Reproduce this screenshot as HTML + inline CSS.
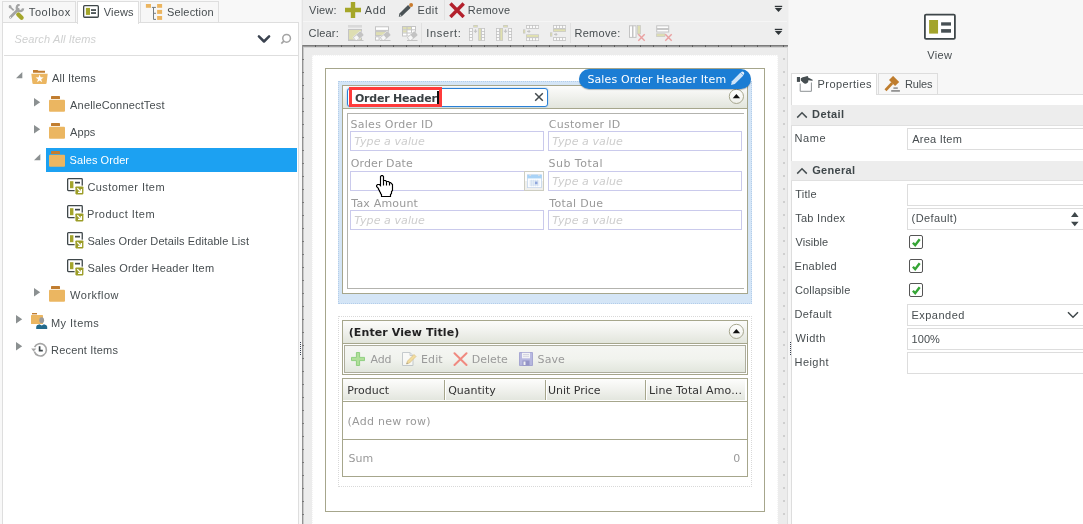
<!DOCTYPE html>
<html>
<head>
<meta charset="utf-8">
<title>View Designer</title>
<style>
*{box-sizing:border-box;margin:0;padding:0}
html,body{width:1083px;height:524px;overflow:hidden;background:#f8f8f8}
body{position:relative;will-change:transform;font-family:"Liberation Sans",sans-serif;font-size:12px;color:#474d50}
.b{position:absolute;display:block}
.t{position:absolute;white-space:nowrap;line-height:14px;display:block}
.os{font-family:"Liberation Sans",sans-serif;font-size:11px;color:#474d50}
.dv{font-family:"DejaVu Sans",sans-serif;font-size:11px;color:#333}
</style>
</head>
<body>
<!-- ===== LEFT PANEL ===== -->
<div class="b" style="left:2px;top:22px;width:297px;height:510px;background:#fff;border:1px solid #dedede"></div>
<div class="b" style="left:2px;top:1px;width:74px;height:22px;background:#f7f7f7;border:1px solid #dedede"></div>
<div class="b" style="left:140px;top:1px;width:79px;height:22px;background:#f7f7f7;border:1px solid #dedede"></div>
<div class="b" style="left:77px;top:1px;width:62px;height:23px;background:#fff;border:1px solid #dedede;border-bottom:none"></div>
<svg class="b" style="left:8px;top:4px" width="17" height="17" viewBox="0 0 17 17"><path d="M2.400 13.300L10.300 5.300" stroke="#a3a4a4" stroke-width="2.700" stroke-linecap="round"/><path d="M11.700 .700A3.200 3.200 0 1 0 15.100 4.300" fill="none" stroke="#a3a4a4" stroke-width="2.300"/><circle cx="2.400" cy="13.300" r=".6" fill="#fff"/><path d="M1 1.200q1.400-.5 2.300 .5l.3 1.600 2.700 2.500-1.200 1.200-2.600-2.600-1.500-.3Q.3 2.800 1 1.200z" fill="#a3a4a4"/><path d="M10.300 10.500l3.300 3.300" stroke="#a4a62b" stroke-width="4.300" stroke-linecap="round"/></svg>
<span class="t os" style="left:28.8px;top:5px;letter-spacing:0.60px;">Toolbox</span>
<svg class="b" style="left:83px;top:5px" width="17" height="14" viewBox="0 0 17 14"><rect x=".65" y=".65" width="14.700" height="11.600" rx="1" fill="#fff" stroke="#3f474a" stroke-width="1.300"/><rect x="2.900" y="2.900" width="4.100" height="7" fill="#a4a62b"/><rect x="8" y="4.200" width="5" height="1.700" fill="#3f474a"/><rect x="8" y="7.200" width="5" height="1.700" fill="#3f474a"/></svg>
<span class="t os" style="left:103.8px;top:5px;letter-spacing:0.14px;">Views</span>
<svg class="b" style="left:145px;top:3px" width="18" height="18" viewBox="0 0 18 18"><rect x=".9" y="1" width="5.100" height="3.800" fill="#ebb560"/><path d="M6.900 4.400h4M8.500 4.400V16.400h2.500M8.500 10.300h2.500" fill="none" stroke="#737c80" stroke-width="1"/><rect x="12.100" y="1" width="5" height="3.800" fill="#ebb560"/><rect x="12.100" y="6.900" width="5" height="4" fill="#ebb560"/><rect x="12.100" y="13" width="5" height="3.900" fill="#ebb560"/></svg>
<span class="t os" style="left:166.9px;top:5px;letter-spacing:0.18px;">Selection</span>
<div class="b" style="left:4px;top:55px;width:294px;height:1px;background:#dedede"></div>
<span class="t os" style="left:14.6px;top:32px;letter-spacing:0.12px;color:#cfd0d0;font-style:italic;">Search All Items</span>
<svg class="b" style="left:257px;top:34px" width="14" height="10" viewBox="0 0 14 10"><path d="M1.900 2.400L7 7.500l5.100-5.100" fill="none" stroke="#3a424f" stroke-width="2.500" stroke-linecap="round" stroke-linejoin="round"/></svg>
<svg class="b" style="left:280px;top:33px" width="12" height="12" viewBox="0 0 12 12"><circle cx="6.600" cy="5.300" r="3.850" fill="none" stroke="#a4a4a4" stroke-width="1.500"/><path d="M3.800 8.200L1.300 10.700" stroke="#a4a4a4" stroke-width="1.700"/></svg>
<div class="b" style="left:46px;top:148px;width:251px;height:24px;background:#1ca1f2"></div>
<svg class="b" style="left:15.7px;top:72.1px" width="7" height="7" viewBox="0 0 7 7"><path d="M6.3 0V6.3H0z" fill="#8b9091"/></svg>
<svg class="b" style="left:30.7px;top:70.0px" width="17" height="15" viewBox="0 0 17 15"><path d="M2 0h4.5l1 .8H14v2H2z" fill="#c17d2f"/><path d="M.3 3.7h16.4l-1.1 9.3q-.1 1-1.1 1H2.5q-1 0-1.1-1z" fill="#ebb661"/><path d="M8.6 4.4L9.6 7.3L12.7 7.4L10.2 9.2L11.1 12.2L8.6 10.4L6.1 12.2L7.0 9.2L4.5 7.4L7.6 7.3z" fill="#fff"/></svg>
<span class="t os" style="left:52.0px;top:71px;letter-spacing:0.19px;">All Items</span>
<svg class="b" style="left:34px;top:98.0px" width="7" height="9" viewBox="0 0 7 9"><path d="M0 0L6.2 4.3 0 8.6z" fill="#8b9091"/></svg>
<svg class="b" style="left:49px;top:96.0px" width="16" height="16" viewBox="0 0 16 16"><rect x="2" y="0" width="9" height="3" rx=".6" fill="#c17d2f"/><rect x="0" y="3.8" width="16" height="12" rx="1" fill="#ebb661"/></svg>
<span class="t os" style="left:70.1px;top:98px;letter-spacing:0.17px;">AnelleConnectTest</span>
<svg class="b" style="left:34px;top:125.1px" width="7" height="9" viewBox="0 0 7 9"><path d="M0 0L6.2 4.3 0 8.6z" fill="#8b9091"/></svg>
<svg class="b" style="left:49px;top:123.1px" width="16" height="16" viewBox="0 0 16 16"><rect x="2" y="0" width="9" height="3" rx=".6" fill="#c17d2f"/><rect x="0" y="3.8" width="16" height="12" rx="1" fill="#ebb661"/></svg>
<span class="t os" style="left:70.1px;top:125px;letter-spacing:0.05px;">Apps</span>
<svg class="b" style="left:33.7px;top:153.5px" width="7" height="7" viewBox="0 0 7 7"><path d="M6.3 0V6.3H0z" fill="#8b9091"/></svg>
<svg class="b" style="left:49px;top:151.1px" width="16" height="16" viewBox="0 0 16 16"><rect x="2" y="0" width="9" height="3" rx=".6" fill="#c17d2f"/><rect x="0" y="3.8" width="16" height="12" rx="1" fill="#ebb661"/></svg>
<span class="t os" style="left:69.6px;top:153px;letter-spacing:0.07px;color:#fff;">Sales Order</span>
<svg class="b" style="left:66.8px;top:177.8px" width="17" height="17" viewBox="0 0 17 17"><rect x=".65" y=".65" width="14.600" height="11.900" rx=".8" fill="#fff" stroke="#3f474a" stroke-width="1.300"/><rect x="3" y="3.2" width="3.4" height="7" fill="#a3a42b"/><rect x="8" y="3.8" width="5" height="1.7" fill="#3f474a"/><rect x="7.6" y="7.6" width="9" height="9" fill="#fff"/><rect x="8.4" y="8.4" width="8" height="8" rx=".8" fill="#9c9d27"/><path d="M10.3 10.3l3.6 3.6M14.4 11v3.4H11" fill="none" stroke="#fff" stroke-width="1.3"/></svg>
<span class="t os" style="left:87.4px;top:180px;letter-spacing:0.42px;">Customer Item</span>
<svg class="b" style="left:66.8px;top:204.9px" width="17" height="17" viewBox="0 0 17 17"><rect x=".65" y=".65" width="14.600" height="11.900" rx=".8" fill="#fff" stroke="#3f474a" stroke-width="1.300"/><rect x="3" y="3.2" width="3.4" height="7" fill="#a3a42b"/><rect x="8" y="3.8" width="5" height="1.7" fill="#3f474a"/><rect x="7.6" y="7.6" width="9" height="9" fill="#fff"/><rect x="8.4" y="8.4" width="8" height="8" rx=".8" fill="#9c9d27"/><path d="M10.3 10.3l3.6 3.6M14.4 11v3.4H11" fill="none" stroke="#fff" stroke-width="1.3"/></svg>
<span class="t os" style="left:86.9px;top:207px;letter-spacing:0.49px;">Product Item</span>
<svg class="b" style="left:66.8px;top:232.1px" width="17" height="17" viewBox="0 0 17 17"><rect x=".65" y=".65" width="14.600" height="11.900" rx=".8" fill="#fff" stroke="#3f474a" stroke-width="1.300"/><rect x="3" y="3.2" width="3.4" height="7" fill="#a3a42b"/><rect x="8" y="3.8" width="5" height="1.7" fill="#3f474a"/><rect x="7.6" y="7.6" width="9" height="9" fill="#fff"/><rect x="8.4" y="8.4" width="8" height="8" rx=".8" fill="#9c9d27"/><path d="M10.3 10.3l3.6 3.6M14.4 11v3.4H11" fill="none" stroke="#fff" stroke-width="1.3"/></svg>
<span class="t os" style="left:87.4px;top:234px;letter-spacing:0.10px;">Sales Order Details Editable List</span>
<svg class="b" style="left:66.8px;top:259.2px" width="17" height="17" viewBox="0 0 17 17"><rect x=".65" y=".65" width="14.600" height="11.900" rx=".8" fill="#fff" stroke="#3f474a" stroke-width="1.300"/><rect x="3" y="3.2" width="3.4" height="7" fill="#a3a42b"/><rect x="8" y="3.8" width="5" height="1.7" fill="#3f474a"/><rect x="7.6" y="7.6" width="9" height="9" fill="#fff"/><rect x="8.4" y="8.4" width="8" height="8" rx=".8" fill="#9c9d27"/><path d="M10.3 10.3l3.6 3.6M14.4 11v3.4H11" fill="none" stroke="#fff" stroke-width="1.3"/></svg>
<span class="t os" style="left:87.4px;top:261px;letter-spacing:0.20px;">Sales Order Header Item</span>
<svg class="b" style="left:34px;top:288.0px" width="7" height="9" viewBox="0 0 7 9"><path d="M0 0L6.2 4.3 0 8.6z" fill="#8b9091"/></svg>
<svg class="b" style="left:49px;top:286.0px" width="16" height="16" viewBox="0 0 16 16"><rect x="2" y="0" width="9" height="3" rx=".6" fill="#c17d2f"/><rect x="0" y="3.8" width="16" height="12" rx="1" fill="#ebb661"/></svg>
<span class="t os" style="left:70.1px;top:288px;letter-spacing:0.49px;">Workflow</span>
<svg class="b" style="left:16px;top:315.2px" width="7" height="9" viewBox="0 0 7 9"><path d="M0 0L6.2 4.3 0 8.6z" fill="#8b9091"/></svg>
<svg class="b" style="left:30.8px;top:313.2px" width="17" height="17" viewBox="0 0 17 17"><rect x="1" y="0" width="5" height="1.4" fill="#c17d2f"/><rect x="0" y="2" width="12" height="9" rx=".6" fill="#ebb661"/><ellipse cx="10.7" cy="7.2" rx="2.4" ry="3" fill="#9a9a9a"/><path d="M5.2 16v-2.3q0-1.7 3.2-2.4l2.3 1.2 2.3-1.2q3.2.7 3.2 2.4V16z" fill="#236a8c"/></svg>
<span class="t os" style="left:51.0px;top:316px;letter-spacing:0.46px;">My Items</span>
<svg class="b" style="left:16px;top:342.3px" width="7" height="9" viewBox="0 0 7 9"><path d="M0 0L6.2 4.3 0 8.6z" fill="#8b9091"/></svg>
<svg class="b" style="left:31.2px;top:341.5px" width="17" height="16" viewBox="0 0 17 16"><path d="M3.6 5.2A6.2 6.2 0 1 1 3.3 9.6" fill="none" stroke="#a5a5a5" stroke-width="1.6"/><path d="M.2 6.6h5.2L2.6 9.6z" fill="#a5a5a5"/><path d="M8.6 4.2v4.4h3.2" fill="none" stroke="#3f474a" stroke-width="1.7"/></svg>
<span class="t os" style="left:51.0px;top:343px;letter-spacing:0.19px;">Recent Items</span>
<div class="b" style="left:300px;top:342px;width:1px;height:13px;background:repeating-linear-gradient(#3a4252 0 1px,transparent 1px 2px)"></div>
<!-- ===== CENTER TOOLBARS ===== -->
<div class="b" style="left:301px;top:0px;width:1px;height:45px;background:#f1f1f1"></div>
<div class="b" style="left:302px;top:0px;width:486px;height:45px;background:#eeeeee;border-left:1px solid #e4e4e4"></div>
<div class="b" style="left:303px;top:21px;width:484px;height:1px;background:#f5f5f5"></div>
<span class="t os" style="left:309.1px;top:3px;letter-spacing:0.16px;">View:</span>
<svg class="b" style="left:345px;top:2px" width="16" height="16" viewBox="0 0 16 16"><path d="M5.8 0h4.4v5.8H16v4.4h-5.8V16H5.8v-5.8H0V5.800H5.800z" fill="#a5a628"/></svg>
<span class="t os" style="left:364.8px;top:3px;letter-spacing:0.62px;">Add</span>
<svg class="b" style="left:398px;top:2px" width="16" height="16" viewBox="0 0 16 16"><path d="M2.500 13L11.400 4.400" stroke="#4a5255" stroke-width="3.800"/><path d="M.8 14.800L1.300 11.800 3.800 14.200z" fill="#4a5255"/><circle cx="13.100" cy="3" r="1.950" fill="#c97a2b"/><circle cx="2.400" cy="13.200" r=".55" fill="#eee"/></svg>
<span class="t os" style="left:417.4px;top:3px;letter-spacing:0.48px;">Edit</span>
<div class="b" style="left:444px;top:0px;width:1px;height:20px;background:#e1e1e1"></div>
<svg class="b" style="left:448px;top:2px" width="17" height="16" viewBox="0 0 17 16"><path d="M2.400 1.500L15.700 15M15.700 1.500L2.400 15" stroke="#b3202c" stroke-width="3.400"/></svg>
<span class="t os" style="left:467.8px;top:3px;letter-spacing:0.26px;">Remove</span>
<svg class="b" style="left:774px;top:5px" width="9" height="8" viewBox="0 0 9 8"><rect x=".8" y=".8" width="7.400" height="1.300" fill="#2f3538"/><path d="M.8 3.100h7.400L4.500 7.100z" fill="#2f3538"/></svg>
<span class="t os" style="left:308.6px;top:26px;letter-spacing:0.16px;">Clear:</span>
<svg class="b" style="left:348px;top:25px" width="16" height="16" viewBox="0 0 16 16"><rect x="0" y="0" width="14" height="2.600" fill="#d9d9d9"/><rect x=".5" y="4.500" width="13" height="10.500" fill="#dedeb2" stroke="#c4c4c4"/><g transform="translate(10.3,11.3) rotate(-40)"><rect x="-5.400" y="-3" width="10.800" height="6" rx="1.200" fill="#eee"/><rect x="-5" y="-2.600" width="10" height="5.200" rx="1" fill="#c3c3c3"/><rect x="-4.300" y="-1.900" width="3.900" height="3.800" rx=".5" fill="#f7f7f7"/></g><rect x="0" y="15" width="15.500" height="1" fill="#c4c4c4"/></svg>
<svg class="b" style="left:375px;top:25px" width="16" height="16" viewBox="0 0 16 16"><rect x=".5" y="1.800" width="13" height="3.600" fill="#fff" stroke="#c4c4c4"/><rect x=".5" y="6.600" width="13" height="4" fill="#dedeb2" stroke="#c4c4c4"/><rect x=".5" y="11.800" width="3.600" height="3.400" fill="#fff" stroke="#c4c4c4"/><g transform="translate(10.3,11.3) rotate(-40)"><rect x="-5.400" y="-3" width="10.800" height="6" rx="1.200" fill="#eee"/><rect x="-5" y="-2.600" width="10" height="5.200" rx="1" fill="#c3c3c3"/><rect x="-4.300" y="-1.900" width="3.900" height="3.800" rx=".5" fill="#f7f7f7"/></g><rect x="5" y="15" width="10.500" height="1" fill="#c4c4c4"/></svg>
<svg class="b" style="left:402px;top:25px" width="16" height="16" viewBox="0 0 16 16"><rect x=".5" y="1.500" width="13" height="9.500" fill="#fff" stroke="#c4c4c4"/><rect x="1" y="2" width="8" height="2.400" fill="#dedeb2"/><rect x="1" y="5.200" width="4" height="2.400" fill="#dedeb2"/><path d="M.5 4.800h13M.5 8h13M5 1.500v9.500M9.500 1.500v9.500" stroke="#c4c4c4" fill="none"/><g transform="translate(10.3,11.3) rotate(-40)"><rect x="-5.400" y="-3" width="10.800" height="6" rx="1.200" fill="#eee"/><rect x="-5" y="-2.600" width="10" height="5.200" rx="1" fill="#c3c3c3"/><rect x="-4.300" y="-1.900" width="3.900" height="3.800" rx=".5" fill="#f7f7f7"/></g><rect x="5" y="15" width="10.500" height="1" fill="#c4c4c4"/></svg>
<div class="b" style="left:421px;top:23px;width:1px;height:20px;background:#e0e0e0"></div>
<span class="t os" style="left:426.3px;top:26px;letter-spacing:0.65px;">Insert:</span>
<svg class="b" style="left:469px;top:25px" width="16" height="16" viewBox="0 0 16 16"><rect x="4.3" y="0" width="4.4" height="2.5" fill="#c3c3c3"/><rect x="4.8999999999999995" y="0.6" width="3.20" height="1.30" fill="#e1e1b0"/><rect x="0" y="3" width="3.800" height="12.800" fill="#c3c3c3"/><rect x="0.8" y="3.80" width="2.200" height="2.200" fill="#fafafa"/><rect x="0.8" y="6.85" width="2.200" height="2.200" fill="#fafafa"/><rect x="0.8" y="9.90" width="2.200" height="2.200" fill="#fafafa"/><rect x="0.8" y="12.95" width="2.200" height="2.200" fill="#fafafa"/><path d="M6.5 4.3v3" stroke="#c3c3c3" stroke-width="1.100" fill="none"/><path d="M4.7 5.9h3.600l-1.800 2z" fill="#c3c3c3"/><path d="M4.7 5.9h3.600" stroke="#c3c3c3" stroke-width=".5"/><rect x="9.3" y="3" width="3.1" height="12.8" fill="#c3c3c3"/><rect x="9.9" y="3.6" width="1.90" height="11.60" fill="#e1e1b0"/><rect x="12.2" y="3" width="3.800" height="12.800" fill="#c3c3c3"/><rect x="13.0" y="3.80" width="2.200" height="2.200" fill="#fafafa"/><rect x="13.0" y="6.85" width="2.200" height="2.200" fill="#fafafa"/><rect x="13.0" y="9.90" width="2.200" height="2.200" fill="#fafafa"/><rect x="13.0" y="12.95" width="2.200" height="2.200" fill="#fafafa"/></svg>
<svg class="b" style="left:496px;top:25px" width="16" height="16" viewBox="0 0 16 16"><rect x="7.2" y="0" width="4.6" height="2.5" fill="#c3c3c3"/><rect x="7.8" y="0.6" width="3.40" height="1.30" fill="#e1e1b0"/><rect x="0" y="3" width="3.800" height="12.800" fill="#c3c3c3"/><rect x="0.8" y="3.80" width="2.200" height="2.200" fill="#fafafa"/><rect x="0.8" y="6.85" width="2.200" height="2.200" fill="#fafafa"/><rect x="0.8" y="9.90" width="2.200" height="2.200" fill="#fafafa"/><rect x="0.8" y="12.95" width="2.200" height="2.200" fill="#fafafa"/><rect x="3.8" y="3" width="3.1" height="12.8" fill="#c3c3c3"/><rect x="4.3999999999999995" y="3.6" width="1.90" height="11.60" fill="#e1e1b0"/><path d="M9.5 4.3v3" stroke="#c3c3c3" stroke-width="1.100" fill="none"/><path d="M7.7 5.9h3.600l-1.800 2z" fill="#c3c3c3"/><path d="M7.7 5.9h3.600" stroke="#c3c3c3" stroke-width=".5"/><rect x="12.2" y="3" width="3.800" height="12.800" fill="#c3c3c3"/><rect x="13.0" y="3.80" width="2.200" height="2.200" fill="#fafafa"/><rect x="13.0" y="6.85" width="2.200" height="2.200" fill="#fafafa"/><rect x="13.0" y="9.90" width="2.200" height="2.200" fill="#fafafa"/><rect x="13.0" y="12.95" width="2.200" height="2.200" fill="#fafafa"/></svg>
<svg class="b" style="left:523px;top:25px" width="16" height="16" viewBox="0 0 16 16"><rect x="3.1" y="0" width="12.800" height="3.800" fill="#c3c3c3"/><rect x="3.90" y="0.8" width="2.200" height="2.200" fill="#fafafa"/><rect x="6.95" y="0.8" width="2.200" height="2.200" fill="#fafafa"/><rect x="10.00" y="0.8" width="2.200" height="2.200" fill="#fafafa"/><rect x="13.05" y="0.8" width="2.200" height="2.200" fill="#fafafa"/><rect x="0" y="4.4" width="2.3" height="4.1" fill="#c3c3c3"/><rect x="0.6" y="5.0" width="1.10" height="2.90" fill="#e1e1b0"/><path d="M4 6.4h3" stroke="#c3c3c3" stroke-width="1.100" fill="none"/><path d="M5.6 4.6000000000000005v3.600l2-1.800z" fill="#c3c3c3"/><rect x="3.1" y="9.4" width="12.8" height="3.1" fill="#c3c3c3"/><rect x="3.7" y="10.0" width="11.60" height="1.90" fill="#e1e1b0"/><rect x="3.1" y="12.3" width="12.800" height="3.800" fill="#c3c3c3"/><rect x="3.90" y="13.100000000000001" width="2.200" height="2.200" fill="#fafafa"/><rect x="6.95" y="13.100000000000001" width="2.200" height="2.200" fill="#fafafa"/><rect x="10.00" y="13.100000000000001" width="2.200" height="2.200" fill="#fafafa"/><rect x="13.05" y="13.100000000000001" width="2.200" height="2.200" fill="#fafafa"/></svg>
<svg class="b" style="left:550px;top:25px" width="16" height="16" viewBox="0 0 16 16"><rect x="3.1" y="0" width="12.800" height="3.800" fill="#c3c3c3"/><rect x="3.90" y="0.8" width="2.200" height="2.200" fill="#fafafa"/><rect x="6.95" y="0.8" width="2.200" height="2.200" fill="#fafafa"/><rect x="10.00" y="0.8" width="2.200" height="2.200" fill="#fafafa"/><rect x="13.05" y="0.8" width="2.200" height="2.200" fill="#fafafa"/><rect x="3.1" y="3.8" width="12.8" height="3" fill="#c3c3c3"/><rect x="3.7" y="4.3999999999999995" width="11.60" height="1.80" fill="#e1e1b0"/><rect x="0" y="7.4" width="2.3" height="4.2" fill="#c3c3c3"/><rect x="0.6" y="8.0" width="1.10" height="3.00" fill="#e1e1b0"/><path d="M4 9.4h3" stroke="#c3c3c3" stroke-width="1.100" fill="none"/><path d="M5.6 7.6000000000000005v3.600l2-1.800z" fill="#c3c3c3"/><rect x="3.1" y="12.1" width="12.800" height="3.800" fill="#c3c3c3"/><rect x="3.90" y="12.9" width="2.200" height="2.200" fill="#fafafa"/><rect x="6.95" y="12.9" width="2.200" height="2.200" fill="#fafafa"/><rect x="10.00" y="12.9" width="2.200" height="2.200" fill="#fafafa"/><rect x="13.05" y="12.9" width="2.200" height="2.200" fill="#fafafa"/></svg>
<div class="b" style="left:570px;top:23px;width:1px;height:20px;background:#e0e0e0"></div>
<span class="t os" style="left:574.5px;top:26px;letter-spacing:0.28px;">Remove:</span>
<svg class="b" style="left:629px;top:25px" width="18" height="18" viewBox="0 0 18 18"><rect x=".5" y=".8" width="3" height="11.600" fill="#fdfdfd" stroke="#c4c4c4"/><rect x="4" y=".8" width="3" height="11.600" fill="#fdfdfd" stroke="#c4c4c4"/><rect x="8.500" y=".5" width="3" height="8.500" fill="#dedeb2" stroke="#c4c4c4" stroke-width=".6"/><path d="M9.3 9.3l6.400 6.400M15.700000000000001 9.3l-6.400 6.400" stroke="#e9a0a0" stroke-width="1.400"/></svg>
<svg class="b" style="left:656px;top:25px" width="18" height="18" viewBox="0 0 18 18"><rect x=".7" y=".8" width="12" height="2.800" fill="#fdfdfd" stroke="#c4c4c4"/><rect x=".7" y="4.400" width="12" height="2.600" fill="#fdfdfd" stroke="#c4c4c4"/><rect x=".5" y="8.800" width="8.500" height="2.800" fill="#dedeb2" stroke="#c4c4c4" stroke-width=".6"/><path d="M9.3 9.3l6.400 6.400M15.700000000000001 9.3l-6.400 6.400" stroke="#e9a0a0" stroke-width="1.400"/></svg>
<svg class="b" style="left:774px;top:28px" width="9" height="8" viewBox="0 0 9 8"><rect x=".8" y=".8" width="7.400" height="1.300" fill="#2f3538"/><path d="M.8 3.100h7.400L4.500 7.100z" fill="#2f3538"/></svg>
<!-- ===== CANVAS ===== -->
<div class="b" style="left:302px;top:45px;width:486px;height:480px;background:#ececec"></div>
<div class="b" style="left:302px;top:45px;width:486px;height:1px;background:#7c7c7c"></div>
<div class="b" style="left:302px;top:46px;width:486px;height:1px;background:#9e9e9e"></div>
<div class="b" style="left:303px;top:47px;width:485px;height:1px;background:#d6d6d6"></div>
<div class="b" style="left:302px;top:45px;width:1px;height:480px;background:#929292"></div>
<div class="b" style="left:303px;top:47px;width:1px;height:480px;background:#c9c9c9"></div>
<div class="b" style="left:304px;top:45px;width:484px;height:2px;background:repeating-linear-gradient(90deg,transparent 0 11.200px,#5e5e5e 11.200px 12.400px,transparent 12.400px 13px)"></div>
<div class="b" style="left:302px;top:47px;width:2px;height:480px;background:repeating-linear-gradient(transparent 0 11.600px,#787878 11.600px 12.800px,transparent 12.800px 13px)"></div>
<div class="b" style="left:783px;top:56px;width:2px;height:470px;background:repeating-linear-gradient(transparent 0 1.700px,#cfcfcf 1.700px 3.700px,transparent 3.700px 13px)"></div>
<div class="b" style="left:312px;top:55px;width:465.5px;height:480px;background:#fff;border:1px dotted #f4f4f4"></div>
<div class="b" style="left:325px;top:68px;width:440px;height:444px;background:#fff;border:1px solid #a6a68c"></div>
<div class="b" style="left:338px;top:81px;width:414px;height:223px;background:#d4e5f6;border:1px dotted #b3cdea"></div>
<div class="b" style="left:342px;top:85px;width:406px;height:209px;background:#fff;border:1px solid #a6a68c"></div>
<div class="b" style="left:343px;top:86px;width:404px;height:22px;background:linear-gradient(#fcfcfb,#f1f2ee 45%,#e2e5dc)"></div>
<div class="b" style="left:343px;top:108px;width:404px;height:1px;background:#a6a68c"></div>
<div class="b" style="left:347px;top:113px;width:397px;height:176px;background:#fff;border:1px solid #b3b3ae;border-right:none"></div>
<div class="b" style="left:347px;top:88px;width:201px;height:19px;background:#fff;border:1px solid #2a80d6;border-radius:3px;box-shadow:0 0 2px #8fc0ee"></div>
<div class="b" style="left:349px;top:87px;width:93px;height:20px;border:3px solid #ff3b3b"></div>
<span class="t dv" style="left:354.9px;top:92px;letter-spacing:-0.20px;color:#3a4144;font-weight:700;">Order Header</span>
<div class="b" style="left:437px;top:91px;width:1.5px;height:13px;background:#111"></div>
<svg class="b" style="left:534px;top:92px" width="10" height="10" viewBox="0 0 10 10"><path d="M1.200 1.200l7.600 7.600M8.800 1.200L1.200 8.800" stroke="#444b4e" stroke-width="1.500"/></svg>
<svg class="b" style="left:728.1px;top:87.89999999999999px" width="17" height="17" viewBox="0 0 17 17"><defs><linearGradient id="cb96" x1="0" y1="0" x2="0" y2="1"><stop offset="0" stop-color="#fff"/><stop offset="1" stop-color="#eff0ea"/></linearGradient></defs><circle cx="8.400" cy="8.400" r="7.100" fill="url(#cb96)" stroke="#a7a78f" stroke-width="1"/><path d="M4.700 10.200h7.400L8.400 5.900z" fill="#111"/></svg>
<div class="b" style="left:579px;top:69px;width:172px;height:20px;background:#1b7dd4;border-radius:10px;box-shadow:0 1px 1px rgba(0,0,0,.25)"></div>
<span class="t dv" style="left:587.4px;top:73px;letter-spacing:0.12px;color:#fff;">Sales Order Header Item</span>
<svg class="b" style="left:729px;top:70px" width="17" height="17" viewBox="0 0 17 17"><path d="M2 15l.9-3.800L11.500 2.600l2.900 2.900L5.800 14.100z" fill="#cfe4f8"/><path d="M12.200 1.900q1.200-1 2.400 .2t.2 2.400l-.4 .4-2.600-2.600z" fill="#e6f1fb"/></svg>
<span class="t dv" style="left:350.6px;top:118px;letter-spacing:0.25px;color:#999;">Sales Order ID</span>
<div class="b" style="left:350.3px;top:131.3px;width:193.5px;height:19.5px;background:#fff;border:1px solid #cacaec"></div>
<span class="t dv" style="left:354.2px;top:135px;letter-spacing:0.08px;color:#cdcdcd;font-style:italic;">Type a value</span>
<span class="t dv" style="left:548.8px;top:118px;letter-spacing:0.27px;color:#999;">Customer ID</span>
<div class="b" style="left:548.3px;top:131.3px;width:193.5px;height:19.5px;background:#fff;border:1px solid #cacaec"></div>
<span class="t dv" style="left:552.2px;top:135px;letter-spacing:0.08px;color:#cdcdcd;font-style:italic;">Type a value</span>
<span class="t dv" style="left:350.8px;top:157px;letter-spacing:0.09px;color:#999;">Order Date</span>
<div class="b" style="left:350.3px;top:171px;width:174.5px;height:19.5px;background:#fff;border:1px solid #cacaec"></div>
<div class="b" style="left:523.8px;top:171px;width:20px;height:19.5px;background:linear-gradient(#fdfdfd 50%,#f0f0ed 50%);border:1px solid #cdcdc1"></div>
<svg class="b" style="left:526.8px;top:173.5px" width="15" height="14" viewBox="0 0 15 14"><rect x=".5" y=".9" width="14" height="12.800" fill="#fbfdff" stroke="#c3d5ea" stroke-width=".8"/><rect x=".3" y=".7" width="14.400" height="3.700" fill="#a9d3f6"/><rect x="2.300" y="0" width="1.800" height="1.700" rx=".5" fill="#e4e4e4"/><rect x="11" y="0" width="1.800" height="1.700" rx=".5" fill="#e4e4e4"/><path d="M2.500 7h10M2.500 9h10M2.500 11h10M4.300 5.800v6.500M6.300 5.800v6.500M8.300 5.800v6.500M10.300 5.800v6.500" stroke="#d3e0f0" stroke-width="1"/><rect x="8" y="7.600" width="2.500" height="2.600" fill="#8fa6dc"/></svg>
<span class="t dv" style="left:548.5px;top:157px;letter-spacing:0.48px;color:#999;">Sub Total</span>
<div class="b" style="left:548.3px;top:171px;width:193.5px;height:19.5px;background:#fff;border:1px solid #cacaec"></div>
<span class="t dv" style="left:552.2px;top:175px;letter-spacing:0.08px;color:#cdcdcd;font-style:italic;">Type a value</span>
<span class="t dv" style="left:351.3px;top:197px;letter-spacing:0.19px;color:#999;">Tax Amount</span>
<div class="b" style="left:350.3px;top:210.3px;width:193.5px;height:19.5px;background:#fff;border:1px solid #cacaec"></div>
<span class="t dv" style="left:354.2px;top:214px;letter-spacing:0.08px;color:#cdcdcd;font-style:italic;">Type a value</span>
<span class="t dv" style="left:549.3px;top:197px;letter-spacing:0.28px;color:#999;">Total Due</span>
<div class="b" style="left:548.3px;top:210.3px;width:193.5px;height:19.5px;background:#fff;border:1px solid #cacaec"></div>
<span class="t dv" style="left:552.2px;top:214px;letter-spacing:0.08px;color:#cdcdcd;font-style:italic;">Type a value</span>
<svg class="b" style="left:376px;top:175px" width="18" height="23" viewBox="0 0 18 23"><path d="M5.500 .5H6.500L7.500 1.500V5.500H9.500L10.500 6.500H12.500L13.500 7.500H14.500L16.500 9.500V15.500L15.500 16.500V18.500L14.500 19.500V21.500H5.500V19.500L4.500 18.500V17.500L3.500 16.500V15.500L2.500 14.500V13.500L.5 11.500V10.500L1.500 9.500H3.500L4.500 10.500V1.500z" fill="#fff" stroke="#000" stroke-width="1.150" stroke-linejoin="miter"/><path d="M7.500 5.500V10.500M10.500 6.500V10.500M13.500 8V10.500" stroke="#000" stroke-width="1.150" fill="none"/></svg>
<div class="b" style="left:338px;top:316px;width:414px;height:171px;border:1px dotted #d9d9d9"></div>
<div class="b" style="left:342px;top:320px;width:406px;height:24px;background:linear-gradient(#fcfcfb,#f1f2ee 45%,#e2e5dc);border:1px solid #a6a68c"></div>
<span class="t dv" style="left:348.7px;top:326px;letter-spacing:0.11px;color:#222;font-weight:700;">(Enter View Title)</span>
<svg class="b" style="left:727.9px;top:323.0px" width="17" height="17" viewBox="0 0 17 17"><defs><linearGradient id="cb331" x1="0" y1="0" x2="0" y2="1"><stop offset="0" stop-color="#fff"/><stop offset="1" stop-color="#eff0ea"/></linearGradient></defs><circle cx="8.400" cy="8.400" r="7.100" fill="url(#cb331)" stroke="#a7a78f" stroke-width="1"/><path d="M4.700 10.200h7.400L8.400 5.900z" fill="#111"/></svg>
<div class="b" style="left:342px;top:344px;width:406px;height:31px;background:#fff;border:1px solid #a6a68c;border-top:none"></div>
<div class="b" style="left:344px;top:345px;width:402px;height:28px;background:linear-gradient(#f5f6f3,#f1f3ee 50%,#e2e6dd);border:1px solid #adad9c"></div>
<svg class="b" style="left:351px;top:352px" width="14" height="14" viewBox="0 0 14 14"><path d="M5.400 .5h3.200V5.400h4.900v3.200H8.600v4.900H5.400V8.600H.5V5.400h4.900z" fill="#a6dc8c" stroke="#6cc35a" stroke-width=".8" opacity=".85"/></svg>
<span class="t dv" style="left:370.5px;top:353px;letter-spacing:-0.18px;color:#9a9a9a;">Add</span>
<svg class="b" style="left:401.3px;top:351.3px" width="16" height="16" viewBox="0 0 16 16"><g opacity=".6"><path d="M1.500 1.500h7.500l3 3v10H1.500z" fill="#fdfdfd" stroke="#a8b0b8"/><path d="M9 1.500v3h3" fill="none" stroke="#a8b0b8"/><path d="M5.500 13l1-3 6.500-6.500 2 2L8.500 12z" fill="#f3cf6a" stroke="#c99a3a" stroke-width=".7"/><path d="M5.500 13l.5-1.500 1 1z" fill="#555"/></g></svg>
<span class="t dv" style="left:421.0px;top:353px;letter-spacing:0.10px;color:#9a9a9a;">Edit</span>
<svg class="b" style="left:453px;top:352px" width="15" height="14" viewBox="0 0 15 14"><path d="M1.500 1.200L13.500 13M13.500 1.200L1.500 13" stroke="#f08a80" stroke-width="2" stroke-linecap="round"/></svg>
<span class="t dv" style="left:471.8px;top:353px;letter-spacing:-0.02px;color:#9a9a9a;">Delete</span>
<svg class="b" style="left:519px;top:352px" width="14" height="14" viewBox="0 0 14 14"><g opacity=".6"><path d="M.5 .5h13v13H.5z" fill="#9292d8" stroke="#7777c2"/><rect x="3" y=".8" width="8" height="5.500" fill="#f4f4fb"/><path d="M4 2.500h6M4 4.300h6" stroke="#b5b5cf" stroke-width=".8"/><rect x="3.500" y="8.500" width="7" height="5" fill="#5a5ab0"/><rect x="4.500" y="9.500" width="2" height="3.500" fill="#f4f4fb"/></g></svg>
<span class="t dv" style="left:537.6px;top:353px;letter-spacing:0.08px;color:#9a9a9a;">Save</span>
<div class="b" style="left:342px;top:378px;width:406px;height:99px;background:#fff;border:1px solid #a6a68c"></div>
<div class="b" style="left:343px;top:379px;width:402px;height:21px;background:linear-gradient(#fdfdfc,#f1f2ee 50%,#e3e6de)"></div>
<div class="b" style="left:343px;top:401px;width:404px;height:1px;background:#a6a68c"></div>
<div class="b" style="left:444px;top:380px;width:1px;height:20px;background:#a6a68c"></div>
<div class="b" style="left:445px;top:380px;width:1px;height:20px;background:#fff"></div>
<div class="b" style="left:545px;top:380px;width:1px;height:20px;background:#a6a68c"></div>
<div class="b" style="left:546px;top:380px;width:1px;height:20px;background:#fff"></div>
<div class="b" style="left:645px;top:380px;width:1px;height:20px;background:#a6a68c"></div>
<div class="b" style="left:646px;top:380px;width:1px;height:20px;background:#fff"></div>
<span class="t dv" style="left:347.3px;top:384px;color:#333;">Product</span>
<span class="t dv" style="left:448.2px;top:384px;color:#333;">Quantity</span>
<span class="t dv" style="left:547.9px;top:384px;color:#333;">Unit Price</span>
<span class="t dv" style="left:649.0px;top:384px;letter-spacing:0.13px;color:#333;">Line Total Amo...</span>
<span class="t dv" style="left:347.5px;top:415px;letter-spacing:0.29px;color:#999;">(Add new row)</span>
<div class="b" style="left:343px;top:439px;width:404px;height:1px;background:#a6a68c"></div>
<span class="t dv" style="left:348.6px;top:452px;color:#999;">Sum</span>
<span class="t dv" style="left:733.2px;top:452px;color:#999;">0</span>
<!-- ===== RIGHT PANEL ===== -->
<div class="b" style="left:788px;top:0px;width:295px;height:524px;background:#f7f7f7"></div>
<div class="b" style="left:787px;top:47px;width:1px;height:477px;background:#dedede"></div>
<div class="b" style="left:788px;top:0px;width:1px;height:45px;background:#f3f3f3"></div>
<svg class="b" style="left:924px;top:13px" width="33" height="28" viewBox="0 0 33 28"><rect x=".9" y="1.650" width="30" height="24.250" rx="1.200" fill="#fff" stroke="#3f474a" stroke-width="1.800"/><rect x="5.100" y="7" width="8.950" height="13.600" fill="#a3a42b"/><rect x="17.100" y="9.300" width="9.900" height="3.300" fill="#475054"/><rect x="17.100" y="16.100" width="9.900" height="3.600" fill="#475054"/></svg>
<span class="t os" style="left:927.2px;top:48px;letter-spacing:0.37px;">View</span>
<div class="b" style="left:791px;top:94px;width:300px;height:440px;background:#fff;border:1px solid #dddddd"></div>
<div class="b" style="left:878px;top:73px;width:60px;height:22px;background:#f7f7f7;border:1px solid #dddddd"></div>
<div class="b" style="left:791px;top:73px;width:86px;height:22px;background:#fff;border:1px solid #dddddd;border-bottom:none"></div>
<svg class="b" style="left:796px;top:76px" width="18" height="17" viewBox="0 0 18 17"><path d="M4.200 7.500V15.300h11.200V6.500" fill="none" stroke="#8d9294" stroke-width="1"/><rect x=".9" y="1" width="3.100" height="4.900" fill="#464e51"/><path d="M4.800 2.200Q6.500 .9 9 .7L11.400 0Q12.500 .3 12.100 1.600L16.600 3.700Q17.100 4.700 16.100 4.800L12.400 4.300Q12.800 6.500 10.400 7.500 8.600 8 7.300 6.700L4.800 4.500z" fill="#464e51"/></svg>
<span class="t os" style="left:817.6px;top:77px;letter-spacing:0.41px;">Properties</span>
<svg class="b" style="left:884px;top:76px" width="17" height="17" viewBox="0 0 17 17"><path d="M8.300 7L1.500 14.200" stroke="#bf7d2e" stroke-width="2.700"/><path d="M15.200 6L11.100 10.100 5 4 9.100 -.1z" fill="#bf7d2e"/><rect x="9.400" y="11.300" width="4.400" height="1.600" fill="#939393"/><rect x="7.200" y="14" width="8.700" height="1.800" fill="#939393"/></svg>
<span class="t os" style="left:904.9px;top:77px;letter-spacing:-0.11px;">Rules</span>
<div class="b" style="left:791px;top:105px;width:292px;height:20.5px;background:#ededed;border-bottom:1px solid #e0e0e0"></div>
<svg class="b" style="left:796px;top:111.4px" width="12" height="8" viewBox="0 0 12 8"><path d="M1.200 6.600L6 1.800l4.800 4.800" fill="none" stroke="#474f52" stroke-width="1.500"/></svg>
<span class="t os" style="left:812.0px;top:107px;letter-spacing:0.44px;color:#3f474a;font-weight:700;">Detail</span>
<span class="t os" style="left:794.5px;top:131px;letter-spacing:0.60px;">Name</span>
<div class="b" style="left:907px;top:128px;width:190px;height:22px;background:#fff;border:1px solid #dddddd"></div>
<span class="t os" style="left:912.2px;top:132px;letter-spacing:0.25px;">Area Item</span>
<div class="b" style="left:791px;top:160.5px;width:292px;height:20.5px;background:#ededed;border-bottom:1px solid #e0e0e0"></div>
<svg class="b" style="left:796px;top:166.9px" width="12" height="8" viewBox="0 0 12 8"><path d="M1.200 6.600L6 1.800l4.800 4.800" fill="none" stroke="#474f52" stroke-width="1.500"/></svg>
<span class="t os" style="left:812.2px;top:163px;letter-spacing:0.31px;color:#3f474a;font-weight:700;">General</span>
<span class="t os" style="left:795.2px;top:187px;letter-spacing:0.26px;">Title</span>
<div class="b" style="left:907px;top:184px;width:190px;height:22px;background:#fff;border:1px solid #dddddd"></div>
<span class="t os" style="left:795.2px;top:211px;letter-spacing:0.27px;">Tab Index</span>
<div class="b" style="left:907px;top:208px;width:190px;height:22px;background:#fff;border:1px solid #dddddd"></div>
<span class="t os" style="left:911.6px;top:211px;letter-spacing:0.39px;">(Default)</span>
<svg class="b" style="left:1070px;top:211px" width="10" height="16" viewBox="0 0 10 16"><path d="M1 5.900h7.600L4.800 .9zM1 10.800h7.600L4.800 15.200z" fill="#3f474a"/></svg>
<span class="t os" style="left:795.5px;top:235px;letter-spacing:0.08px;">Visible</span>
<div class="b" style="left:909.2px;top:235.2px;width:13.6px;height:13.6px;background:#fff;border:1px solid #555;border-radius:2px"></div><svg class="b" style="left:910.7px;top:236.7px" width="11" height="11" viewBox="0 0 11 11"><path d="M1.900 5.700l2.300 2.500 4.500-5.900" fill="none" stroke="#35a535" stroke-width="2.400"/></svg>
<span class="t os" style="left:794.5px;top:259px;letter-spacing:0.31px;">Enabled</span>
<div class="b" style="left:909.2px;top:259.2px;width:13.6px;height:13.6px;background:#fff;border:1px solid #555;border-radius:2px"></div><svg class="b" style="left:910.7px;top:260.7px" width="11" height="11" viewBox="0 0 11 11"><path d="M1.900 5.700l2.300 2.500 4.500-5.900" fill="none" stroke="#35a535" stroke-width="2.400"/></svg>
<span class="t os" style="left:795.0px;top:283px;letter-spacing:0.15px;">Collapsible</span>
<div class="b" style="left:909.2px;top:283.2px;width:13.6px;height:13.6px;background:#fff;border:1px solid #555;border-radius:2px"></div><svg class="b" style="left:910.7px;top:284.7px" width="11" height="11" viewBox="0 0 11 11"><path d="M1.900 5.700l2.300 2.500 4.500-5.900" fill="none" stroke="#35a535" stroke-width="2.400"/></svg>
<span class="t os" style="left:794.5px;top:307px;letter-spacing:0.38px;">Default</span>
<div class="b" style="left:907px;top:304px;width:190px;height:22px;background:#fff;border:1px solid #dddddd"></div>
<span class="t os" style="left:911.4px;top:308px;letter-spacing:0.49px;">Expanded</span>
<svg class="b" style="left:1067px;top:311.3px" width="12" height="8" viewBox="0 0 12 8"><path d="M1 1.300l5 5 5-5" fill="none" stroke="#3f474a" stroke-width="1.500"/></svg>
<span class="t os" style="left:795.5px;top:331px;letter-spacing:0.43px;">Width</span>
<div class="b" style="left:907px;top:328px;width:190px;height:22px;background:#fff;border:1px solid #dddddd"></div>
<span class="t os" style="left:911.6px;top:332px;letter-spacing:0.03px;">100%</span>
<span class="t os" style="left:794.5px;top:355px;letter-spacing:0.45px;">Height</span>
<div class="b" style="left:907px;top:352px;width:190px;height:22px;background:#fff;border:1px solid #dddddd"></div>
<div class="b" style="left:790px;top:342px;width:1px;height:13px;background:repeating-linear-gradient(#3a4252 0 1px,transparent 1px 2px)"></div>
</body>
</html>
